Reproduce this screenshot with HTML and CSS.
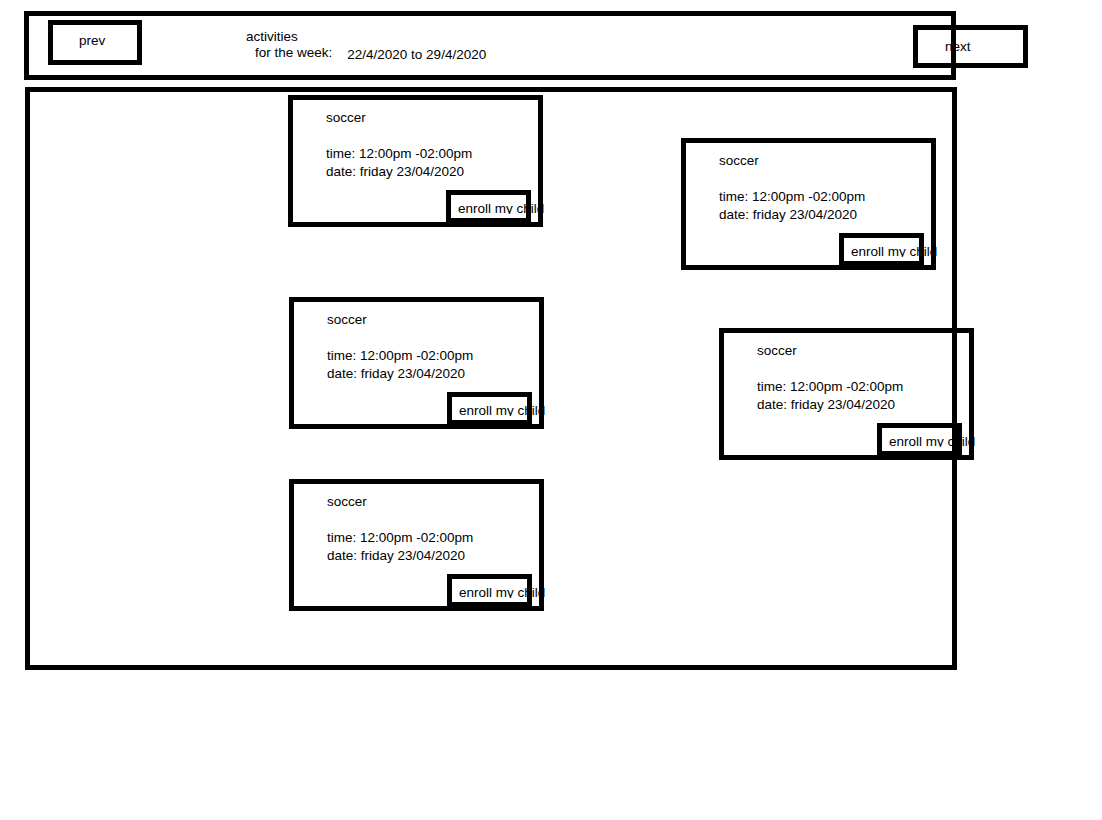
FILE: index.html
```html
<!DOCTYPE html>
<html lang="en">
<head>
<meta charset="utf-8">
<title>activities for the week</title>
<link rel="stylesheet" href="styles.css">
</head>
<body>
<div class="page">
  <header class="week-bar">
    <div class="nav-btn prev">prev</div>
    <div class="week-title">
      <div class="title-line">activities</div>
      <div class="title-line indent">for the week:<span class="range">22/4/2020 to 29/4/2020</span></div>
    </div>
    <div class="nav-btn next">next</div>
  </header>

  <main class="board">
    <div class="col col-left">
      <section class="card card-1">
        <div class="line">soccer</div>
        <div class="line blank"></div>
        <div class="line">time: 12:00pm -02:00pm</div>
        <div class="line">date: friday 23/04/2020</div>
        <div class="enroll"><span class="enroll-label">enroll my child</span></div>
      </section>
      <section class="card card-3">
        <div class="line">soccer</div>
        <div class="line blank"></div>
        <div class="line">time: 12:00pm -02:00pm</div>
        <div class="line">date: friday 23/04/2020</div>
        <div class="enroll"><span class="enroll-label">enroll my child</span></div>
      </section>
      <section class="card card-5">
        <div class="line">soccer</div>
        <div class="line blank"></div>
        <div class="line">time: 12:00pm -02:00pm</div>
        <div class="line">date: friday 23/04/2020</div>
        <div class="enroll"><span class="enroll-label">enroll my child</span></div>
      </section>
    </div>
    <div class="col col-right">
      <section class="card card-2">
        <div class="line">soccer</div>
        <div class="line blank"></div>
        <div class="line">time: 12:00pm -02:00pm</div>
        <div class="line">date: friday 23/04/2020</div>
        <div class="enroll"><span class="enroll-label">enroll my child</span></div>
      </section>
      <section class="card card-4">
        <div class="line">soccer</div>
        <div class="line blank"></div>
        <div class="line">time: 12:00pm -02:00pm</div>
        <div class="line">date: friday 23/04/2020</div>
        <div class="enroll"><span class="enroll-label">enroll my child</span></div>
      </section>
    </div>
  </main>
</div>
</body>
</html>
```

FILE: styles.css
```css
* { box-sizing: border-box; }

body {
  margin: 0;
  background: #fff;
  color: #000;
  font-family: "Liberation Sans", Arial, sans-serif;
  font-size: 13.5px;
}

.page {
  padding: 11px 0 0 24px;
}

/* drawn outlines sit over content, like strokes in the sketch */
.week-bar::after,
.board::after,
.card::after,
.enroll::after {
  content: "";
  position: absolute;
  inset: 0;
  border: 5px solid #000;
  pointer-events: none;
}
.week-bar::after, .board::after { z-index: 3; }
.card::after { z-index: 2; }
.enroll::after { z-index: 1; }

/* header */
.week-bar {
  position: relative;
  width: 932px;
  height: 69px;
  padding: 5px;
  display: flex;
  align-items: flex-start;
}

.nav-btn {
  border: 5px solid #000;
  line-height: 18px;
  white-space: nowrap;
}

.prev {
  width: 94px;
  height: 45px;
  margin: 4px 0 0 19px;
  padding: 7px 0 0 26px;
}

.next {
  position: absolute;
  left: 889px;
  top: 14px;
  width: 115px;
  height: 43px;
  padding: 8px 0 0 27px;
}

.week-title {
  margin: 13px 0 0 104px;
}

.title-line {
  line-height: 16px;
  white-space: nowrap;
}

.indent {
  padding-left: 9px;
}

.range {
  margin-left: 15px;
  vertical-align: -2px;
}

/* board */
.board {
  position: relative;
  width: 932px;
  height: 583px;
  margin: 7px 0 0 1px;
  padding: 5px;
  display: flex;
  align-items: flex-start;
}

.col {
  display: flex;
  flex-direction: column;
}

.col-left {
  margin-left: 258px;
}

.col-right {
  margin-left: 137px;
}

.card {
  position: relative;
  width: 255px;
  height: 132px;
  padding: 14px 12px 4px 38px;
  display: flex;
  flex-direction: column;
}

.card-1 { margin-top: 3px; }
.card-3 { margin-top: 70px; margin-left: 1px; }
.card-5 { margin-top: 50px; margin-left: 1px; }
.card-2 { margin-top: 46px; }
.card-4 { margin-top: 58px; margin-left: 38px; }

.line {
  line-height: 18px;
  height: 18px;
  white-space: nowrap;
}

.enroll {
  position: relative;
  align-self: flex-end;
  margin-top: auto;
  width: 85px;
  height: 33px;
  padding: 10px 0 0 12px;
  white-space: nowrap;
}

.enroll-label {
  display: inline-block;
  height: 18px;
  line-height: 18px;
  clip-path: inset(0 -120px 4px 0);
}
```
